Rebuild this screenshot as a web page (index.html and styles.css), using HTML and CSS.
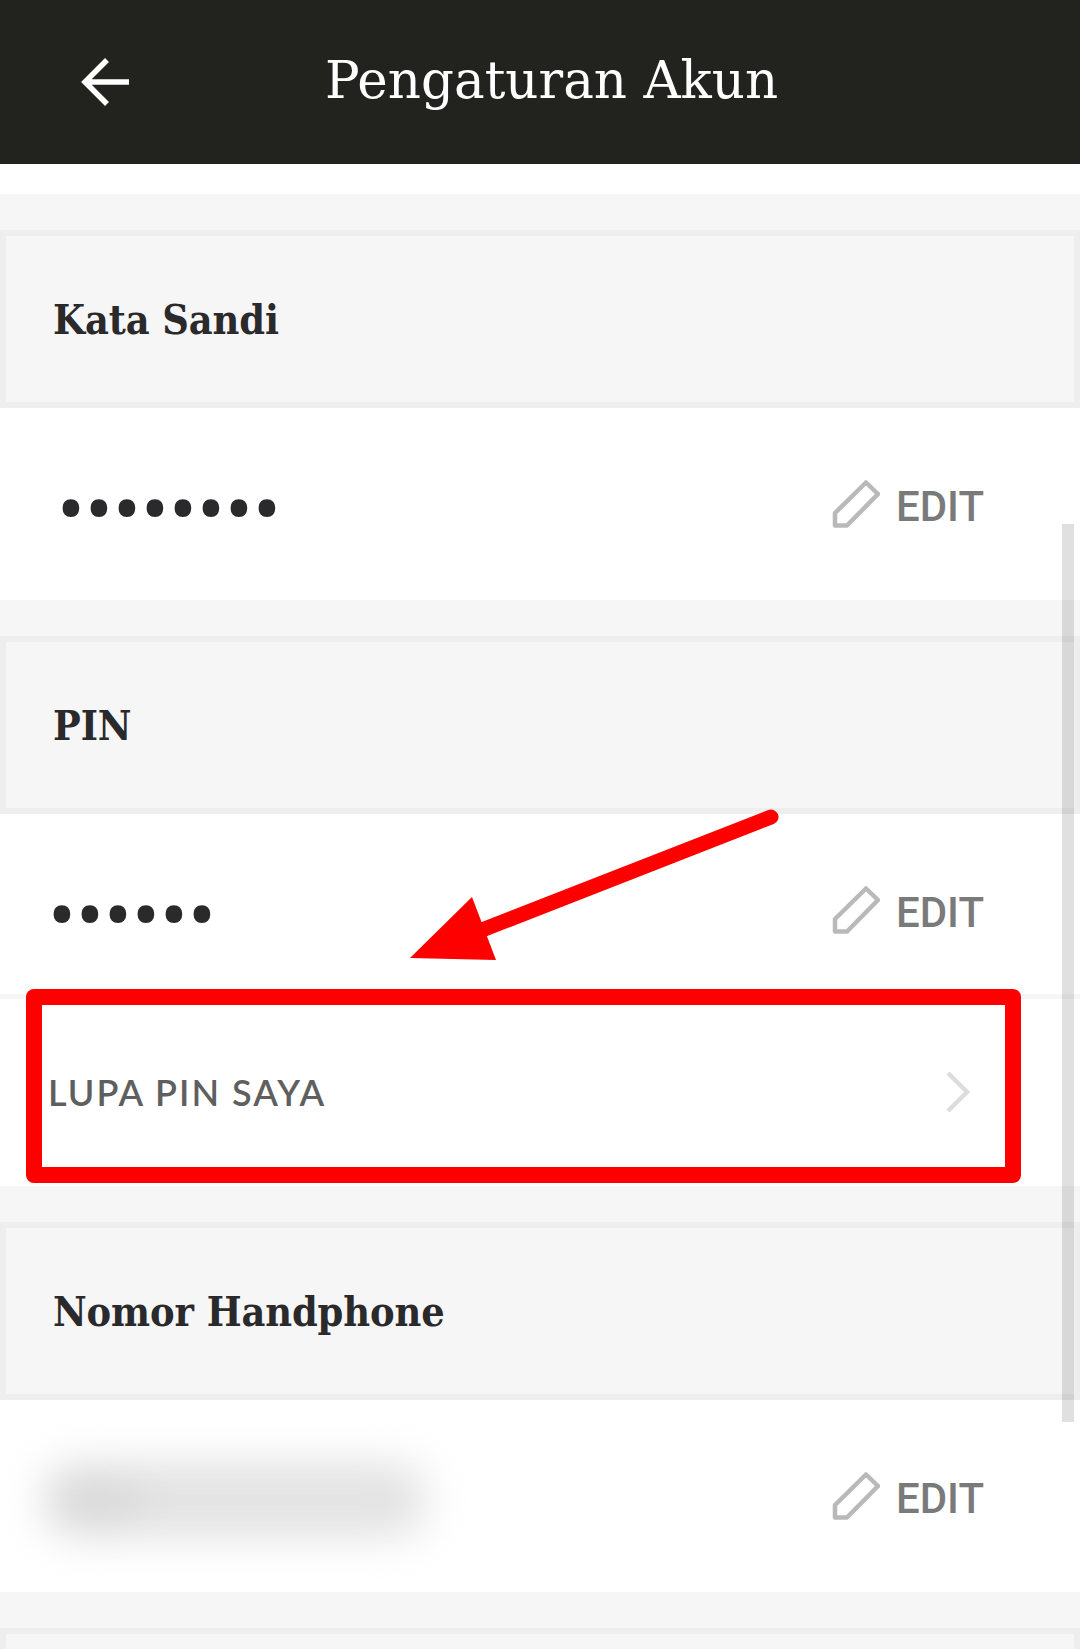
FILE: index.html
```html
<!DOCTYPE html>
<html lang="id">
<head>
<meta charset="utf-8">
<title>Pengaturan Akun</title>
<link rel="stylesheet" href="styles.css">
</head>
<body>
<div class="app">
  <header class="topbar">
    <svg class="back" viewBox="0 0 48 48" width="48" height="48"><path d="M48 24H4M26 2L4 24l22 22"/></svg>
    <h1 class="title">Pengaturan Akun</h1>
  </header>
  <main class="content">
    <section class="group">
      <div class="band"><h2 class="label">Kata Sandi</h2></div>
      <div class="row row-a">
        <span class="secret secret-8">••••••••</span>
        <a class="edit"><svg class="pencil" viewBox="0 0 48 48" width="48" height="48"><path d="M34 2.5L46 14 15 45.500H3V33z"/></svg><span>EDIT</span></a>
      </div>
    </section>
    <section class="group">
      <div class="band"><h2 class="label">PIN</h2></div>
      <div class="row row-b">
        <span class="secret">••••••</span>
        <a class="edit"><svg class="pencil" viewBox="0 0 48 48" width="48" height="48"><path d="M34 2.5L46 14 15 45.500H3V33z"/></svg><span>EDIT</span></a>
      </div>
      <div class="forgot">
        <span class="forgot-text">LUPA PIN SAYA</span>
        <svg class="chevron" viewBox="0 0 24 42" width="24" height="42"><path d="M2 2l19 19L2 40"/></svg>
      </div>
    </section>
    <section class="group">
      <div class="band"><h2 class="label">Nomor Handphone</h2></div>
      <div class="row row-a">
        <div class="smudge"><div class="smudge-dark"></div></div>
        <a class="edit"><svg class="pencil" viewBox="0 0 48 48" width="48" height="48"><path d="M34 2.5L46 14 15 45.500H3V33z"/></svg><span>EDIT</span></a>
      </div>
    </section>
    <section class="group">
      <div class="band"><h2 class="label">&nbsp;</h2></div>
    </section>
  </main>
  <div class="scrollbar"></div>
  <div class="highlight"></div>
  <svg class="annotation" viewBox="0 0 1080 1649" width="1080" height="1649">
    <path class="arrow-line" d="M771 817L482 930"/>
    <path class="arrow-head" d="M472 897L496 960L410 958z"/>
  </svg>
</div>
</body>
</html>
```
FILE: styles.css
```css
* { box-sizing: border-box; }
html, body { margin: 0; padding: 0; background: #fff; }
.app { position: relative; width: 1080px; height: 1649px; overflow: hidden; background: #fff; }
.topbar { height: 164px; background: #22231e; display: flex; align-items: center; padding-left: 81px; gap: 196px; }
.back { flex: none; fill: none; stroke: #fff; stroke-width: 5.500; }
.title { margin: -2px 0 0; color: #fff; font: 400 51.500px/1 "DejaVu Serif", serif; white-space: nowrap; }
.content { padding-top: 30px; }
.group { background: #fff; }
.band { background: #f6f6f6; padding-top: 36px; }
.label { margin: 0; height: 178px; border: 6px solid #eee; padding: 3px 0 0 47px; display: flex; align-items: center; font: 700 41px/1 "DejaVu Serif Condensed", "DejaVu Serif", serif; letter-spacing: -.1px; color: #2a2a2c; }
.row { display: flex; align-items: center; justify-content: space-between; padding-right: 96px; }
.row-a { height: 192px; padding-top: 4px; padding-left: 48px; }
.row-b { height: 180px; padding-top: 16px; padding-left: 48px; }
.secret { margin-top: 8px; font: 400 83px/1 Roboto, sans-serif; color: #2a2a2c; }
.secret-8 { margin-left: 9px; }
.edit { display: flex; align-items: center; gap: 16px; font: 500 42px/1 Roboto, sans-serif; color: #7a7a7a; padding-top: 2px; }
.pencil { display: block; margin-top: -6px; fill: none; stroke: #b9b9b9; stroke-width: 4.500; stroke-linejoin: round; }
.forgot { height: 192px; border-top: 5px solid #f6f6f6; display: flex; align-items: center; justify-content: space-between; padding: 0 110px 2px 48px; }
.forgot-text { font: 600 36px/1 Lato, sans-serif; letter-spacing: 2px; color: #5f5f5f; }
.chevron { display: block; fill: none; stroke: #ddd; stroke-width: 4.500; }
.smudge { position: relative; width: 385px; height: 76px; margin: 4px 0 0 -6px; background: #e3e3e3; border-radius: 36px; filter: blur(20px); }
.smudge-dark { position: absolute; left: 10px; top: 14px; width: 90px; height: 50px; border-radius: 25px; background: #d9d9d9; }
.scrollbar { position: absolute; top: 524px; right: 6px; width: 12px; height: 898px; background: rgba(0, 0, 0, .12); }
.highlight { position: absolute; left: 26px; top: 989px; width: 995px; height: 194px; border: 16px solid #f00; border-radius: 8px; }
.annotation { position: absolute; left: 0; top: 0; pointer-events: none; }
.arrow-line { fill: none; stroke: #f00; stroke-width: 15; stroke-linecap: round; }
.arrow-head { fill: #f00; }
```
